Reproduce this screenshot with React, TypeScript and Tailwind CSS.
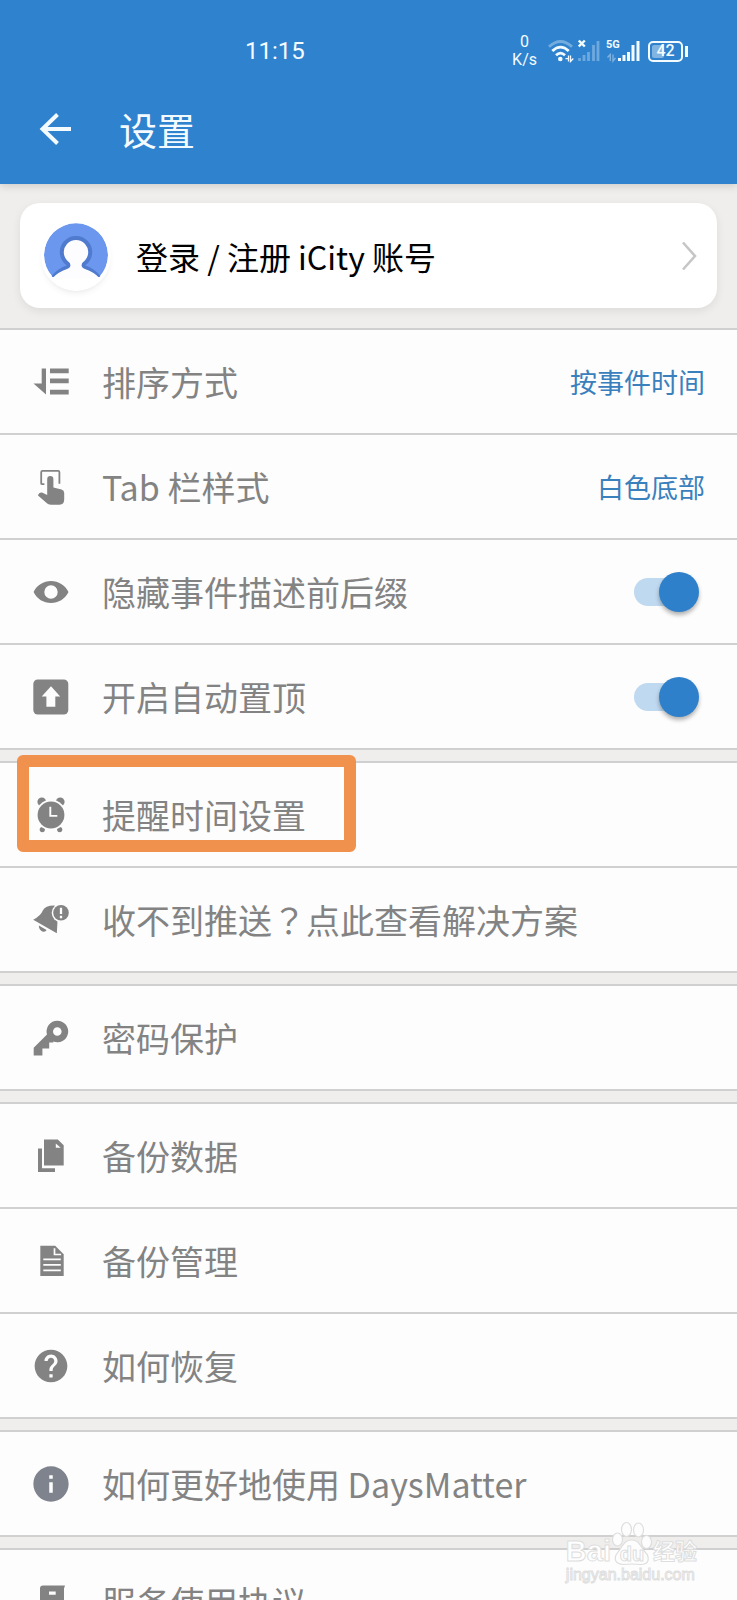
import { useState } from 'react'
import type { ReactNode } from 'react'

interface SettingItem {
  id: string
  label: ReactNode
  icon: ReactNode
  value?: string
  toggle?: boolean
  highlighted?: boolean
}

const CIRCLE = 'M12 2C6.48 2 2 6.48 2 12s4.48 10 10 10 10-4.48 10-10S17.52 2 12 2z'

function Icon({ children, viewBox = '0 0 36 36' }: { children: ReactNode; viewBox?: string }) {
  return (
    <svg viewBox={viewBox} className="size-9 shrink-0" fill="currentColor" aria-hidden="true">
      {children}
    </svg>
  )
}

const GROUPS: SettingItem[][] = [
  [
    {
      id: 'sort',
      label: '排序方式',
      value: '按事件时间',
      icon: (
        <Icon>
          <path d="M8.7 4.5H13v26L.5 19.5h8.2zM17 4.5h18.7v4.7H17zM17 14.6h18.7v4.7H17zM17 25.8h18.7v4.7H17z" />
        </Icon>
      ),
    },
    {
      id: 'tab',
      label: 'Tab 栏样式',
      value: '白色底部',
      icon: (
        <Icon>
          <path
            d="M11.4 15.2H9.2Q8.2 15.2 8.2 14.2V3.2Q8.2 1.9 9.5 1.9H25.2Q26.4 1.9 26.4 3.2V14.8"
            fill="none"
            stroke="currentColor"
            strokeWidth="1.8"
          />
          <path d="M14.2 10.2a3.1 3.1 0 0 1 6.2 0V18.4l8.2 2Q31.2 21.2 31.2 24V30.8Q31 35.6 26.6 35.8H18.4Q16 35.8 14.2 34.4L5 26.4Q5.8 23.2 9 23.4L14.2 26z" />
        </Icon>
      ),
    },
    {
      id: 'affix',
      label: '隐藏事件描述前后缀',
      toggle: true,
      icon: (
        <Icon>
          <path
            fillRule="evenodd"
            d="M.6 18C4 11 10.5 7 18 7s14 4 17.5 11C32 25 25.5 29 18 29S4 25 .6 18zM18 11.3a6.7 6.7 0 1 0 0 13.4 6.7 6.7 0 0 0 0-13.4z"
          />
        </Icon>
      ),
    },
    {
      id: 'pin',
      label: '开启自动置顶',
      toggle: true,
      icon: (
        <Icon>
          <rect x=".3" y=".5" width="35" height="35" rx="4.5" />
          <path d="M18 7.2l9.2 10.4h-4.9v10.2h-8.9V17.6H8.7z" fill="#fdfdfd" />
        </Icon>
      ),
    },
  ],
  [
    {
      id: 'remind',
      label: '提醒时间设置',
      highlighted: true,
      icon: (
        <Icon>
          <circle cx="8.8" cy="4.8" r="4.4" />
          <circle cx="27.2" cy="4.8" r="4.4" />
          <circle cx="9.3" cy="32.6" r="2.6" />
          <circle cx="26.7" cy="32.6" r="2.6" />
          <circle cx="18" cy="18" r="15.2" fill="#fdfdfd" />
          <circle cx="18" cy="18" r="13.4" />
          <path d="M17.3 9.8v9.1h7" fill="none" stroke="#fdfdfd" strokeWidth="1.9" />
        </Icon>
      ),
    },
    {
      id: 'push',
      // the question mark sits in the middle of its square
      label: (
        <>
          收不到推送<span className="font-['Noto_Sans_CJK_TC',sans-serif]" lang="zh-TW">？</span>点此查看解决方案
        </>
      ),
      icon: (
        <Icon>
          <path d="M.2 17.8Q8 13.500 9.800 8.500Q12.500 3.200 21.500 3.400L27 12Q24 18 24.300 23L23.800 31.200z" />
          <path d="M5.800 23.400l7.800 4.500q-1.200 2.500-4.200 1.500Q6 27.800 5.800 23.400z" />
          <circle cx="28" cy="10.8" r="9.3" fill="#fdfdfd" />
          <circle cx="28" cy="10.8" r="7.8" />
          <path d="M28 5.8v6.2M28 13.8v2.4" stroke="#fdfdfd" strokeWidth="2.3" />
        </Icon>
      ),
    },
  ],
  [
    {
      id: 'password',
      label: '密码保护',
      icon: (
        <Icon>
          <path
            fillRule="evenodd"
            d="M24.3.7a10.8 10.8 0 1 1-4 20.8V22.4H16.2V28.5H9.4V35.5H.7V27.8L14 14.6A10.8 10.8 0 0 1 24.3.7zm0 6.5a4.3 4.3 0 1 0 0 8.6 4.3 4.3 0 0 0 0-8.6z"
          />
        </Icon>
      ),
    },
  ],
  [
    {
      id: 'backup',
      label: '备份数据',
      icon: (
        <Icon>
          <path fillRule="evenodd" d="M11 1.5h13.8l5.9 5.8v20.2H11zM22.8 5.6v4.2h4.9z" />
          <path d="M5 10.5h4v19.7h13V34H5z" />
        </Icon>
      ),
    },
    {
      id: 'manage',
      label: '备份管理',
      icon: (
        <Icon>
          <path d="M7.3 2.7h14.9l8.5 8.5V33H7.3z" />
          <path
            d="M21.5 5.2v6.3h6.6M10.3 16.4h17.5M10.3 21.9h17.5M10.3 27.4h17.5"
            fill="none"
            stroke="#fdfdfd"
            strokeWidth="1.7"
          />
        </Icon>
      ),
    },
    {
      id: 'restore',
      label: '如何恢复',
      icon: (
        <Icon viewBox="1 1 22 22">
          <path
            d={`${CIRCLE}m1 17h-2v-2h2v2zm2.07-7.75l-.9.92C13.45 12.9 13 13.5 13 15h-2v-.5c0-1.1.45-2.1 1.17-2.83l1.24-1.26c.37-.36.59-.86.59-1.41 0-1.1-.9-2-2-2s-2 .9-2 2H8c0-2.21 1.79-4 4-4s4 1.79 4 4c0 .88-.36 1.68-.93 2.25z`}
          />
        </Icon>
      ),
    },
  ],
  [
    {
      id: 'guide',
      label: '如何更好地使用 DaysMatter',
      icon: (
        <Icon viewBox="1.8 1.8 20.4 20.4">
          <path fill="#7f838d" d={`${CIRCLE}m1 15h-2v-6h2v6zm0-8h-2V7h2v2z`} />
        </Icon>
      ),
    },
  ],
  [
    {
      id: 'terms',
      label: '服务使用协议',
      icon: (
        <Icon>
          <path
            fillRule="evenodd"
            d="M10 1.5h22l-1 3V34H10q-3 0-3-3V4.5q0-3 3-3zM16 7.5v3.2h6.7V7.5zM12 17v2h14v-2zM12 23v2h14v-2z"
          />
        </Icon>
      ),
    },
  ],
]

function StatusBar() {
  return (
    <div className="flex h-[74px] items-center justify-between pt-[28px] pr-[49px] pl-[245px]">
      <span className="font-[Roboto] text-2xl">11:15</span>
      <div className="flex items-center">
        <div className="mr-[11px] text-center font-[Roboto] text-base leading-[18px]">
          <div>0</div>
          <div>K/s</div>
        </div>
        <svg viewBox="0 0 26 24" className="mr-[4px] h-6 w-[26px]" fill="none" stroke="#f4fbff" aria-hidden="true">
          <path d="M1 7.8Q12.5-2.8 24 7.8" strokeWidth="2.8" opacity=".35" />
          <path d="M4.3 12Q12.5 4.3 20.7 12" strokeWidth="2.8" />
          <path d="M8 16.2Q12.5 12 17 16.2" strokeWidth="2.8" />
          <circle cx="12.3" cy="20" r="2.3" fill="#f4fbff" stroke="none" />
          <path d="M17.5 19.6h3v-3M20.5 16.5v6M22.5 16.5v6l2.8-3" strokeWidth="1.3" />
        </svg>
        <svg viewBox="0 0 22 24" className="mr-[6px] h-6 w-[22px]" stroke="#f4fbff" aria-hidden="true">
          <path d="M.8 1.5l6 6M6.8 1.5l-6 6" strokeWidth="2.4" />
          <path d="M1.5 22v-3M6 22v-6M10.5 22v-9M15.5 22V6M20 22V2" strokeWidth="2.8" opacity=".32" />
        </svg>
        <div className="relative mr-[8px] h-6 w-[34px]">
          <span className="absolute top-0 left-0 font-[Roboto] text-[11px] leading-[11px] font-bold">5G</span>
          <svg viewBox="0 0 34 24" className="h-6 w-[34px]" fill="none" stroke="#f4fbff" aria-hidden="true">
            <path d="M1.5 18.5l2.8-3v6.5M7 15.5V22l2.5-3" strokeWidth="1.4" opacity=".4" />
            <path d="M13.5 22v-3M18 22v-6M22.5 22v-9M27 22V6M32 22V2" strokeWidth="3" />
          </svg>
        </div>
        <div className="relative flex h-[21px] w-[35px] items-center justify-center rounded-[5px] border-2 border-[#f4fbff]">
          <span className="absolute inset-y-[2px] left-[2px] w-[12px] rounded-xs bg-white/40" />
          <span className="relative font-[Roboto] text-base leading-none font-medium">42</span>
        </div>
        <span className="ml-[2px] h-[11px] w-[3px] bg-[#f4fbff]" />
      </div>
    </div>
  )
}

function Avatar() {
  return (
    <svg viewBox="0 0 70 70" className="size-[70px] rounded-full bg-white shadow-md shadow-black/5" aria-hidden="true">
      <clipPath id="face">
        <path d="M11.5 56A32 32 0 1 1 58.5 56z" />
      </clipPath>
      <g clipPath="url(#face)">
        <circle cx="35" cy="34" r="32" fill="#6b97ef" />
        <path
          d="M9 60Q17 49.5 26 46.5Q29.5 45 26.5 42.5A14.2 14.2 0 1 1 43.5 42.5Q40.5 45 44 46.5Q53 49.5 61 60z"
          fill="#fdfdff"
          stroke="#4f7acd"
          strokeWidth="4"
        />
      </g>
      <path d="M11 57.5Q17 51 26 48Q31 46 29 42H41Q39 46 44 48Q53 51 59 57.5z" fill="#fdfdff" />
    </svg>
  )
}

function SettingRow({ item }: { item: SettingItem }) {
  const [on, setOn] = useState(true)

  const content = (
    <>
      {item.icon}
      <span className="flex-1 text-[34px] leading-[48px] whitespace-nowrap">{item.label}</span>
      {item.value && <span className="text-[27px] leading-[40px] text-[#3a80bd]">{item.value}</span>}
    </>
  )

  if (item.toggle) {
    return (
      <label className="flex h-[103px] items-center gap-[33px] pr-[38px] pl-[33px]">
        {content}
        <input
          type="checkbox"
          checked={on}
          onChange={(e) => setOn(e.target.checked)}
          className="relative h-10 w-[65px] appearance-none before:absolute before:top-[6px] before:left-0 before:h-[28px] before:w-[56px] before:rounded-full before:bg-gray-300 after:absolute after:top-0 after:left-0 after:size-10 after:rounded-full after:bg-gray-50 after:shadow-[0_3px_4px_rgba(0,0,0,0.3)] checked:before:bg-[#bfd9f0] checked:after:left-[25px] checked:after:bg-[#2f80ca]"
        />
      </label>
    )
  }

  return (
    <button type="button" className="relative flex h-[103px] w-full items-center gap-[33px] pr-[32px] pl-[33px] text-left">
      {content}
      {item.highlighted && (
        <span className="absolute -top-[8px] left-[17px] h-[97px] w-[339px] rounded-md border-12 border-[#f0924e]" />
      )}
    </button>
  )
}

function Watermark() {
  return (
    <div className="pointer-events-none absolute right-[40px] bottom-[16px] font-['Liberation_Sans','Noto_Sans_CJK_SC',sans-serif] text-white [-webkit-text-stroke:1px_#dedede]">
      <div className="flex h-[46px] items-end">
        <span className="text-[29px] leading-[30px] font-bold">Bai</span>
        <div className="relative flex h-[46px] w-[42px] items-end justify-center">
          <svg viewBox="0 0 42 46" className="absolute inset-0" fill="#fdfdfd" stroke="#dedede" strokeWidth="1.2" aria-hidden="true">
            <ellipse cx="6.5" cy="19.5" rx="5" ry="6.5" />
            <ellipse cx="15.5" cy="9.5" rx="5" ry="7" />
            <ellipse cx="27.5" cy="10" rx="5" ry="7" />
            <ellipse cx="35.5" cy="22" rx="5" ry="6.5" />
            <path d="M21 20q5 0 8.5 5.5t7 9.5q3 9-6.5 9.5-4.5-.5-9-.5t-9 .5Q2 43.5 5 35q3-4 6.5-9.5T21 20z" />
          </svg>
          <span className="relative text-[20px] leading-[24px] font-bold">du</span>
        </div>
        <span className="text-[22px] leading-[28px] font-bold">经验</span>
      </div>
      <div className="text-base leading-[18px]">jingyan.baidu.com</div>
    </div>
  )
}

export default function App() {
  return (
    <div
      lang="zh-CN"
      className="relative h-screen overflow-hidden bg-[#efeeed] font-['Noto_Sans_CJK_SC',sans-serif] text-[#838383]"
    >
      <header className="relative bg-[#2f82ce] text-[#f4fbff] shadow-[0_2px_8px_rgba(0,0,0,0.15)]">
        <StatusBar />
        <div className="flex h-[110px] items-center gap-[45px] pl-[38px]">
          <button type="button" aria-label="返回">
            <svg viewBox="0 0 36 36" className="size-9" fill="none" stroke="currentColor" strokeWidth="4" aria-hidden="true">
              <path d="M33 18H5M19.5 3.5L4.5 18l15 14.5" />
            </svg>
          </button>
          <h1 className="text-[38px] leading-[54px]">设置</h1>
        </div>
      </header>

      <div className="px-[20px] pt-[19px] pb-[20px]">
        <button
          type="button"
          className="flex h-[105px] w-full items-center rounded-[20px] bg-white pr-[20px] pl-[21px] text-black shadow-[0_3px_10px_rgba(0,0,0,0.08)]"
        >
          <Avatar />
          <span className="ml-[25px] flex-1 text-left text-[32px] leading-[44px]">登录 / 注册 iCity 账号</span>
          <svg viewBox="0 0 16 30" className="h-[30px] w-4" fill="none" stroke="#c6c6c6" strokeWidth="2.6" aria-hidden="true">
            <path d="M2 1.5l12 13.5L2 28.5" />
          </svg>
        </button>
      </div>

      <main className="flex flex-col gap-[11px]">
        {GROUPS.map((group) => (
          <ul key={group[0].id} className="divide-y-2 divide-[#d0d0d0] border-y-2 border-[#d0d0d0] bg-[#fdfdfd]">
            {group.map((item) => (
              <li key={item.id}>
                <SettingRow item={item} />
              </li>
            ))}
          </ul>
        ))}
      </main>

      <Watermark />
    </div>
  )
}
